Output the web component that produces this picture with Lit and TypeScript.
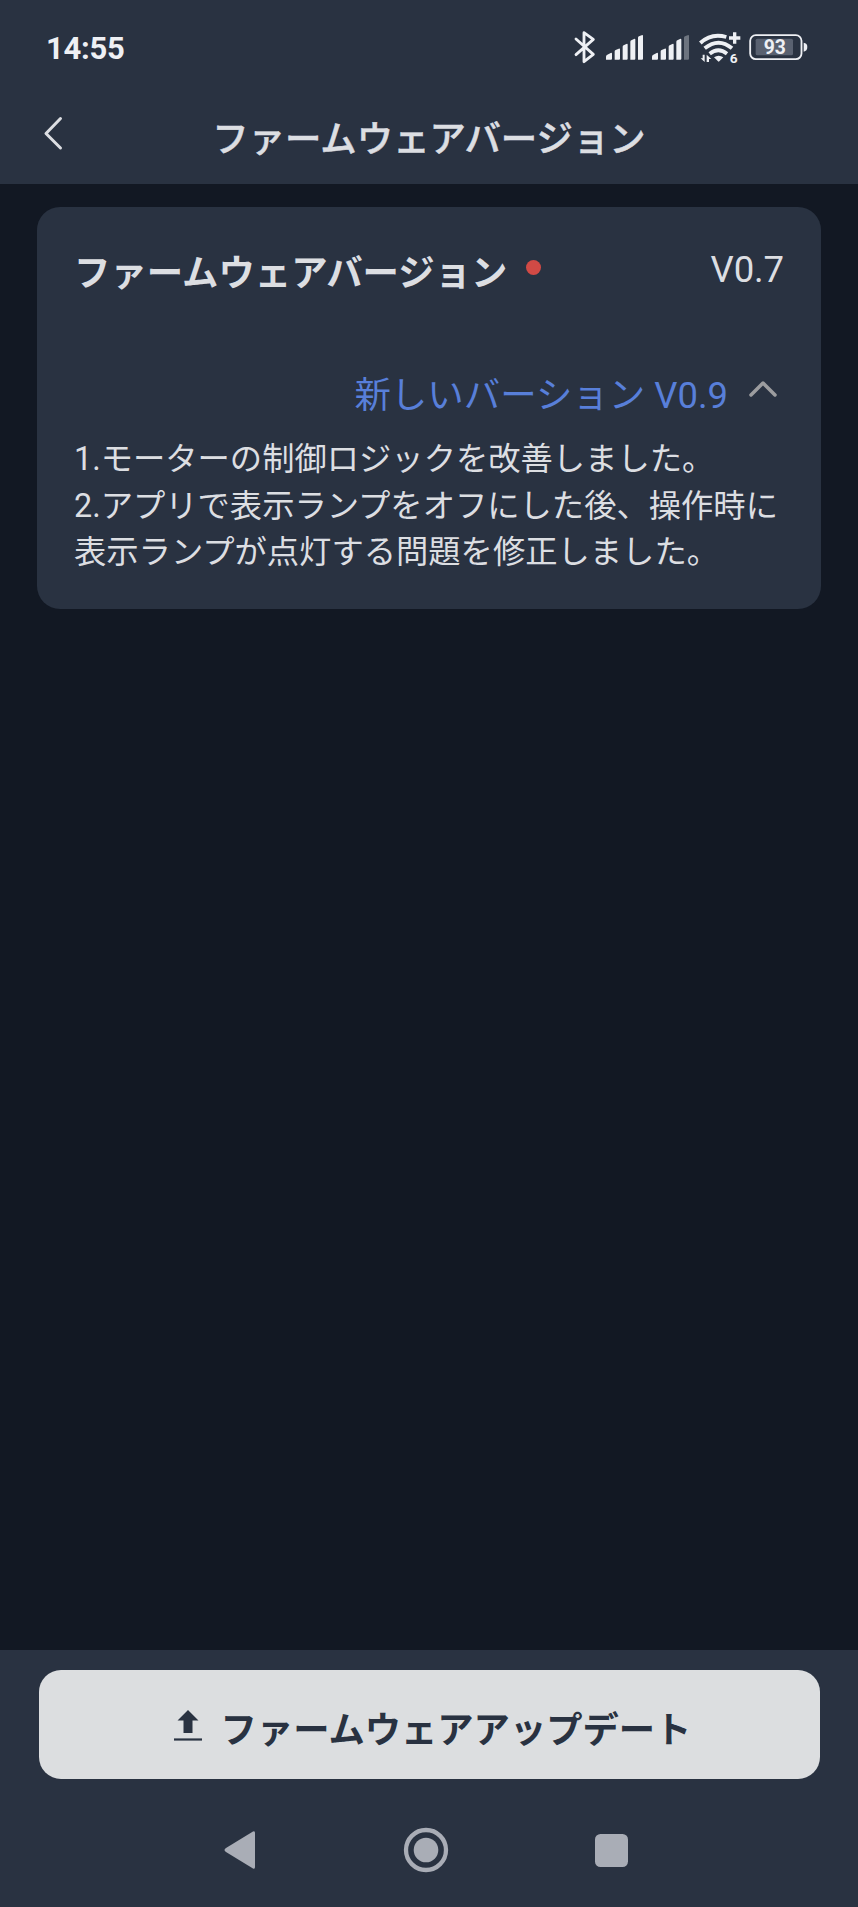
import { LitElement, html, css, svg } from "lit";
import { customElement, property, state } from "lit/decorators.js";

@customElement("status-bar")
class StatusBar extends LitElement {
  static styles = css`
    :host {
      display: flex;
      align-items: flex-start;
      justify-content: space-between;
      box-sizing: border-box;
      height: 92px;
      padding: 20px 44px 0 46px;
      color: #eef0f4;
    }
    .time {
      padding-top: 1px;
      font-size: 31px;
      font-weight: 700;
      line-height: 56px;
      letter-spacing: -0.3px;
    }
    .icons {
      display: flex;
    }
    svg {
      display: block;
      height: 60px;
      fill: #eef0f4;
    }
    .stroke {
      fill: none;
      stroke: #eef0f4;
    }
    .dim {
      fill: #6d747f;
    }
    .charge {
      fill: #596170;
    }
    .tiny {
      font: 700 41px Roboto, sans-serif;
    }
    .level {
      font: 700 58px Roboto, sans-serif;
    }
  `;

  private signal(lastDim: boolean) {
    return html`<svg width="46" viewBox="0 0 138 180">
      <path d="M12 119v-9q0-4 4-6l10-5q4-2 4 2v15q0 3-3 3z" />
      <path d="M38 119V94q0-3 3-4l9-4q4-2 4 2v28q0 3-3 3z" />
      <path d="M62 119V80q0-3 3-4l8-4q4-2 4 2v42q0 3-3 3z" />
      <path d="M85 119V65q0-3 3-4l8-4q4-2 4 2v57q0 3-3 3z" />
      <path class=${lastDim ? "dim" : ""} d="M108 119V53q0-3 3-4l8-3q4-2 4 2v68q0 3-3 3z" />
    </svg>`;
  }

  render() {
    return html`
      <span class="time">14:55</span>
      <div class="icons">
        <svg width="42" viewBox="0 0 126 180">
          <path
            class="stroke"
            stroke-width="8.500"
            stroke-linejoin="round"
            stroke-linecap="round"
            d="M48 57l52 46-28 22V38l28 20-52 46"
          />
        </svg>
        ${this.signal(false)} ${this.signal(true)}
        <svg width="52" viewBox="402 0 156 180">
          <g class="stroke" stroke-width="11.500">
            <path d="M421 69q33-31 78-18" />
            <path d="M434 85q42-34 82 0" />
            <path d="M449 101q26-20 52 0" />
          </g>
          <path d="M462 112q14-10 28 0l-12 12q-2 2-4 0z" />
          <path d="M519 37h10v12h12v10h-12v12h-10V59h-12V49h12z" />
          <path d="M428 104h6v22l-12-11h6zM440 126v-22l14 13h-7v9z" />
          <text class="tiny" x="509" y="129">6</text>
        </svg>
        <svg width="68" viewBox="558 0 204 180">
          <rect class="stroke" stroke-width="5.500" x="570.500" y="45.500" width="154" height="72" rx="17" />
          <rect class="charge" x="587" y="56" width="112" height="50" rx="5" />
          <text class="level" x="611" y="103">93</text>
          <path d="M731 68q11 1 11 13t-11 14z" />
        </svg>
      </div>
    `;
  }
}

@customElement("title-bar")
class TitleBar extends LitElement {
  @property() heading = "";

  static styles = css`
    :host {
      display: grid;
      grid-template-columns: 106px 1fr 106px;
      height: 92px;
      color: #dcdee2;
    }
    .back {
      display: block;
      padding: 22px 0 0 42px;
    }
    h1 {
      margin: 0;
      padding-top: 18px;
      font-size: 36.400px;
      font-weight: 500;
      line-height: 60px;
      text-align: center;
      white-space: nowrap;
      -webkit-text-stroke: 0.5px #dcdee2;
    }
  `;

  render() {
    return html`
      <svg class="back" width="24" height="38" viewBox="0 0 24 38">
        <path
          d="M18.500 4.500L4 19.500l14.500 14.500"
          fill="none"
          stroke="#dcdee2"
          stroke-width="3"
          stroke-linecap="round"
          stroke-linejoin="round"
        />
      </svg>
      <h1>${this.heading}</h1>
    `;
  }
}

@customElement("version-card")
class VersionCard extends LitElement {
  @state() private open = true;

  static styles = css`
    :host {
      display: block;
      box-sizing: border-box;
      height: 402px;
      margin: 23px 37px 0;
      padding: 32px 37px 0 37px;
      border-radius: 23px;
      background: #293241;
      color: #dcdee2;
    }
    .current {
      display: flex;
      align-items: flex-start;
      height: 127px;
    }
    h2 {
      margin: 5px 0 0;
      font-size: 36.400px;
      font-weight: 700;
      line-height: 60px;
      white-space: nowrap;
    }
    .dot {
      width: 15px;
      height: 15px;
      margin: 21px 0 0 19px;
      border-radius: 50%;
      background: #d14a45;
    }
    .version {
      margin: 1px 0 0 auto;
      font-size: 36.500px;
      line-height: 60px;
      letter-spacing: -0.1px;
    }
    .latest {
      display: flex;
      justify-content: flex-end;
      padding-right: 6px;
      color: #587fd9;
      font-size: 36.450px;
      line-height: 60px;
      height: 70px;
    }
    .chevron {
      margin: 13px 0 0 20px;
    }
    .notes {
      margin: 0;
      font-size: 32.300px;
      line-height: 46.500px;
      white-space: nowrap;
    }
  `;

  private toggle() {
    this.open = !this.open;
  }

  render() {
    return html`
      <div class="current">
        <h2>ファームウェアバージョン</h2>
        <span class="dot"></span>
        <span class="version">V0.7</span>
      </div>
      <div class="latest" @click=${this.toggle}>
        <span>新しいバーション V0.9</span>
        <svg class="chevron" width="30" height="20" viewBox="0 0 30 20">
          <path
            d="M3 16L15 4l12 12"
            fill="none"
            stroke="#9c9d9f"
            stroke-width="3.500"
            stroke-linecap="round"
            stroke-linejoin="round"
          />
        </svg>
      </div>
      ${this.open
        ? html`<p class="notes">
            1.モーターの制御ロジックを改善しました。<br />2.アプリで表示ランプをオフにした後、操作時に<br />表示ランプが点灯する問題を修正しました。
          </p>`
        : ""}
    `;
  }
}

@customElement("nav-bar")
class NavBar extends LitElement {
  static styles = css`
    :host {
      display: grid;
      grid-template-columns: 186px 194px 50px;
      height: 50px;
      padding-left: 215px;
    }
    svg {
      display: block;
      fill: #a9adb6;
    }
    .ring {
      fill: none;
      stroke: #a9adb6;
      stroke-width: 4.300px;
    }
  `;

  private icon(shape: unknown) {
    return html`<svg width="50" height="50" viewBox="0 0 50 50">${shape}</svg>`;
  }

  render() {
    return html`
      ${this.icon(svg`<path d="M38 6.500q2-1 2 1.500v34q0 2.500-2 1.500L11 27q-3-2 0-4z" />`)}
      ${this.icon(svg`<circle class="ring" cx="25" cy="25" r="20" /><circle cx="25" cy="25" r="12.300" />`)}
      ${this.icon(svg`<rect x="0" y="9" width="33" height="33" rx="5.500" />`)}
    `;
  }
}

@customElement("app-root")
class AppRoot extends LitElement {
  static styles = css`
    :host {
      display: flex;
      flex-direction: column;
      height: 1907px;
      background: #121823;
      font-family: Roboto, "Noto Sans CJK JP", sans-serif;
    }
    .top {
      height: 184px;
      background: #293241;
    }
    .content {
      flex: 1;
      display: flex;
      flex-direction: column;
    }
    .bottom {
      box-sizing: border-box;
      height: 257px;
      padding-top: 20px;
      background: #293241;
    }
    .update {
      display: flex;
      justify-content: center;
      box-sizing: border-box;
      width: 781px;
      height: 109px;
      margin: 0 auto 46px 38.500px;
      padding: 0 0 0 6px;
      border: 0;
      border-radius: 22px;
      background: #dcdee0;
      color: #293241;
      font-family: inherit;
      font-size: 36.300px;
      font-weight: 700;
      line-height: 60px;
      white-space: nowrap;
    }
    .label {
      margin-top: 31px;
    }
    .upload {
      margin: 38px 18px 0 0;
    }
  `;

  render() {
    return html`
      <div class="top">
        <status-bar></status-bar>
        <title-bar heading="ファームウェアバージョン"></title-bar>
      </div>
      <div class="content">
        <version-card></version-card>
      </div>
      <div class="bottom">
        <button class="update">
          <svg class="upload" width="30" height="34" viewBox="0 0 30 34">
            <path d="M15 2l10.500 10.500h-6V25h-9V12.500h-6z" fill="#293241" />
            <path d="M1 31.500h28" stroke="#293241" stroke-width="2.200" />
          </svg>
          <span class="label">ファームウェアアップデート</span>
        </button>
        <nav-bar></nav-bar>
      </div>
    `;
  }
}
